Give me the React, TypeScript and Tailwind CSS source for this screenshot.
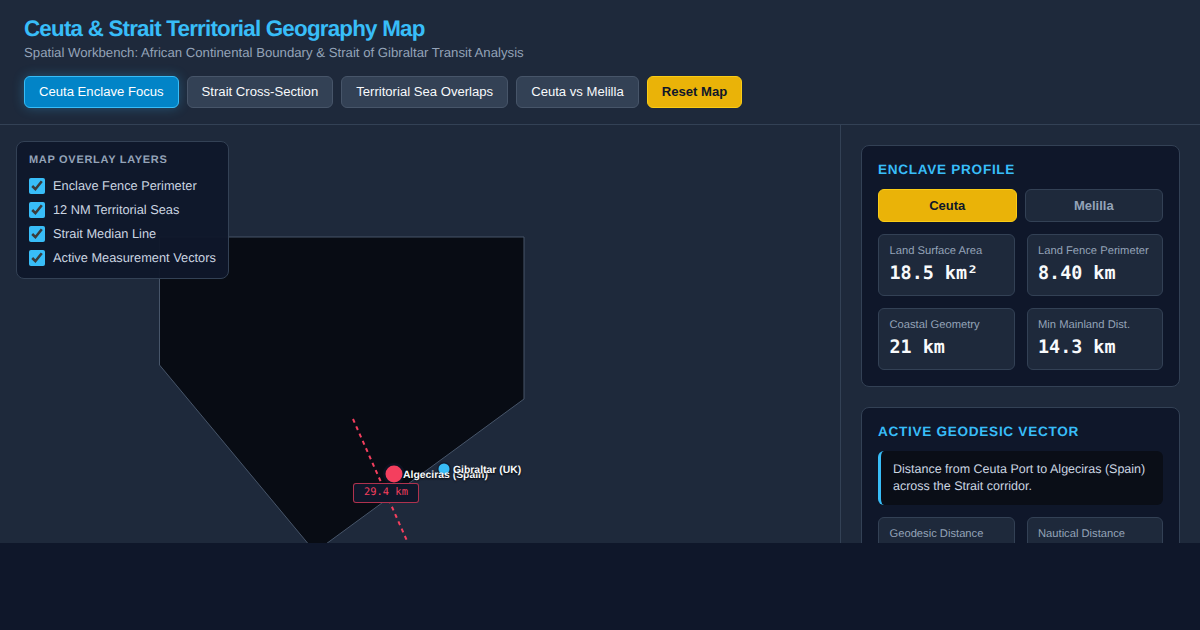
import React from "react";

const tabs = ["Strait Cross-Section", "Territorial Sea Overlaps", "Ceuta vs Melilla"];
const layers = ["Enclave Fence Perimeter", "12 NM Territorial Seas", "Strait Median Line", "Active Measurement Vectors"];

function Stat({ label, value }: { label: string; value?: React.ReactNode }) {
  return (
    <div className="h-[62px] rounded-md border border-[#334155] bg-[#1e293b] px-[10.5px] pt-[10px]">
      <div className="text-[11.2px] leading-[13px] text-[#94a3b8]">{label}</div>
      <div className="mt-[3px] font-['DejaVu_Sans_Mono',monospace] text-[18.4px] font-bold leading-[26px] text-[#f8fafc]">{value}</div>
    </div>
  );
}

export default function App() {
  return (
    <div className="h-[630px] overflow-hidden bg-[#0f172a] font-['Liberation_Sans',Arial,sans-serif] [text-rendering:geometricPrecision]">
      <div className="flex h-[543px] flex-col overflow-hidden bg-[#1e293b]">
        <header className="h-[125px] shrink-0 border-b border-[#334155] px-6 pt-4">
          <h1 className="text-[22.4px] font-bold leading-[26px] tracking-[-0.8px] text-[#38bdf8]">Ceuta &amp; Strait Territorial Geography Map</h1>
          <p className="mt-[3px] text-[13.2px] leading-4 text-[#94a3b8]">Spatial Workbench: African Continental Boundary &amp; Strait of Gibraltar Transit Analysis</p>
          <div className="mt-[15px] flex gap-2">
            <button className="h-8 rounded-md border border-[#38bdf8] bg-[#0284c7] px-[14px] text-[13.12px] font-medium text-white shadow-[0_0_12px_rgba(56,189,248,0.3)]">Ceuta Enclave Focus</button>
            {tabs.map((t) => (
              <button key={t} className="h-8 rounded-md border border-[#475569] bg-[#334155] px-[14px] text-[13.12px] font-medium text-[#f8fafc]">{t}</button>
            ))}
            <button className="h-8 rounded-md border border-[#facc15] bg-[#eab308] px-[14px] text-[13.12px] font-bold text-[#0f172a]">Reset Map</button>
          </div>
        </header>
        <main className="flex min-h-0 flex-1">
          <section className="relative w-[840px] shrink-0 overflow-hidden">
            <svg className="absolute inset-0" width="840" height="418" viewBox="0 125 840 418">
              <polygon points="159.5,237 524,237 524,399 315,552 159.5,365" fill="#080c14" stroke="#475569" strokeWidth="1" />
              <line x1="353" y1="419" x2="415.5" y2="560" stroke="#f43f5e" strokeWidth="2" strokeDasharray="4 4" />
              <circle cx="394" cy="474" r="11" fill="#0f172a" fillOpacity="0.6" />
              <circle cx="394" cy="474" r="8.5" fill="#f43f5e" />
              <circle cx="444" cy="469" r="7" fill="#0f172a" fillOpacity="0.6" />
              <circle cx="444" cy="469" r="5.5" fill="#38bdf8" />
              <text x="403" y="478" fontSize="10.4" fontWeight="700" fill="#f8fafc" fontFamily="Liberation Sans" style={{ textShadow: "0 1px 2px rgba(0,0,0,0.9)" }}>Algeciras (Spain)</text>
              <text x="453" y="473" fontSize="10.4" fontWeight="700" fill="#f8fafc" fontFamily="Liberation Sans" style={{ textShadow: "0 1px 2px rgba(0,0,0,0.9)" }}>Gibraltar (UK)</text>
            </svg>
            <div className="absolute left-[353px] top-[358px] flex h-[19.5px] w-[66px] items-center justify-center rounded-[3px] border border-[#f43f5e]/70 bg-[#0f172a] font-['DejaVu_Sans_Mono',monospace] text-[10.4px] text-[#f43f5e]">29.4 km</div>
            <div className="absolute left-4 top-4 w-[213px] rounded-lg border border-[#334155] bg-[#0f172a]/95 px-3 pb-3 pt-3">
              <div className="text-[11px] font-bold leading-[13px] tracking-[0.7px] text-[#94a3b8]">MAP OVERLAY LAYERS</div>
              <div className="mt-[11px] flex flex-col gap-2">
                {layers.map((l) => (
                  <label key={l} className="flex h-4 items-center gap-2 text-[12.8px] text-[#cbd5e1]">
                    <input type="checkbox" defaultChecked className="m-0 h-4 w-4 shrink-0 accent-[#38bdf8]" />
                    <span className="whitespace-nowrap">{l}</span>
                  </label>
                ))}
              </div>
            </div>
          </section>
          <aside className="min-w-0 flex-1 overflow-hidden border-l border-[#334155] px-5 py-5">
            <div className="rounded-lg border border-[#334155] bg-[#0f172a] p-4">
              <h2 className="text-[13.6px] font-bold leading-4 tracking-[0.7px] text-[#38bdf8]">ENCLAVE PROFILE</h2>
              <div className="mt-[11px] flex gap-2">
                <button className="h-[33px] flex-1 rounded-md border border-[#facc15] bg-[#eab308] text-[13px] font-bold text-[#0f172a]">Ceuta</button>
                <button className="h-[33px] flex-1 rounded-md border border-[#334155] bg-[#1e293b] text-[13px] font-bold text-[#94a3b8]">Melilla</button>
              </div>
              <div className="mt-3 grid grid-cols-2 gap-3">
                <Stat label="Land Surface Area" value="18.5 km²" />
                <Stat label="Land Fence Perimeter" value="8.40 km" />
                <Stat label="Coastal Geometry" value="21 km" />
                <Stat label="Min Mainland Dist." value="14.3 km" />
              </div>
            </div>
            <div className="mt-5 rounded-lg border border-[#334155] bg-[#0f172a] p-4">
              <h2 className="text-[13.6px] font-bold leading-4 tracking-[0.7px] text-[#38bdf8]">ACTIVE GEODESIC VECTOR</h2>
              <div className="mt-[11px] rounded-md border-l-[3px] border-[#38bdf8] bg-[#0a0e17] px-3 py-[10px] text-[12.5px] leading-[17px] text-[#cbd5e1]">Distance from Ceuta Port to Algeciras (Spain) across the Strait corridor.</div>
              <div className="mt-3 grid grid-cols-2 gap-3">
                <Stat label="Geodesic Distance" value="29.4 km" />
                <Stat label="Nautical Distance" value="15.9 NM" />
              </div>
            </div>
          </aside>
        </main>
      </div>
    </div>
  );
}
